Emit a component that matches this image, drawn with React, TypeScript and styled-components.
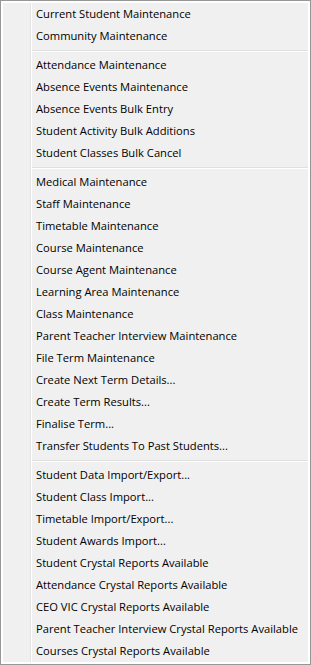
import styled, { createGlobalStyle } from 'styled-components'

const GlobalStyle = createGlobalStyle`
  html, body {
    margin: 0;
    padding: 0;
    background: #ffffff;
  }
`

const groups: string[][] = [
  ['Current Student Maintenance', 'Community Maintenance'],
  [
    'Attendance Maintenance',
    'Absence Events Maintenance',
    'Absence Events Bulk Entry',
    'Student Activity Bulk Additions',
    'Student Classes Bulk Cancel',
  ],
  [
    'Medical Maintenance',
    'Staff Maintenance',
    'Timetable Maintenance',
    'Course Maintenance',
    'Course Agent Maintenance',
    'Learning Area Maintenance',
    'Class Maintenance',
    'Parent Teacher Interview Maintenance',
    'File Term Maintenance',
    'Create Next Term Details...',
    'Create Term Results...',
    'Finalise Term...',
    'Transfer Students To Past Students...',
  ],
  [
    'Student Data Import/Export...',
    'Student Class Import...',
    'Timetable Import/Export...',
    'Student Awards Import...',
    'Student Crystal Reports Available',
    'Attendance Crystal Reports Available',
    'CEO VIC Crystal Reports Available',
    'Parent Teacher Interview Crystal Reports Available',
    'Courses Crystal Reports Available',
  ],
]

const App = () => {
  return (
    <>
      <GlobalStyle />
      <Menu>
        {groups.map((group, gi) => (
          <Group key={gi}>
            {gi > 0 && <Separator />}
            {group.map((label) => (
              <Item key={label}>{label}</Item>
            ))}
          </Group>
        ))}
      </Menu>
    </>
  )
}

export default App

const Menu = styled.div`
  box-sizing: border-box;
  width: 311px;
  height: 665px;
  border: 1px solid #979797;
  padding: 2px;
  background-color: #f0f0f0;
  background-image: linear-gradient(
    to right,
    transparent 27px,
    #e2e3e3 27px,
    #e2e3e3 28px,
    #ffffff 28px,
    #ffffff 29px,
    transparent 29px
  );
  background-origin: content-box;
  background-clip: content-box;
  background-repeat: no-repeat;
  display: flex;
  flex-direction: column;
  font-family: 'Segoe UI', 'Open Sans', 'Noto Sans', sans-serif;
  font-size: 11.2px;
  color: #000000;
`

const Group = styled.div`
  display: flex;
  flex-direction: column;
`

const Separator = styled.div`
  margin: 3px 0 2px 29px;
  height: 0;
  border-top: 1px solid #e0e0e0;
  border-bottom: 1px solid #ffffff;
`

const Item = styled.div`
  height: 22px;
  line-height: 22px;
  padding-left: 33px;
  white-space: nowrap;
  cursor: default;
`
